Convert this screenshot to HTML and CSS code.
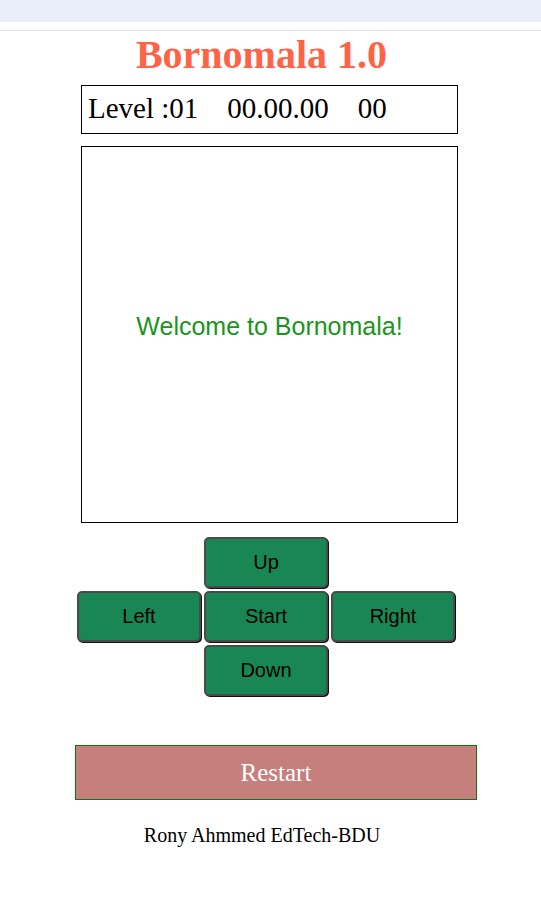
FILE: index.html
```html
<!DOCTYPE html>
<html>
<head>
<meta charset="utf-8">
<title>Bornomala 1.0</title>
<link rel="stylesheet" href="styles.css">
</head>
<body>
<div class="topbar"></div>
<div class="rule"></div>
<h1 class="title">Bornomala 1.0</h1>
<div class="info">Level :01&nbsp;&nbsp;&nbsp;&nbsp;00.00.00&nbsp;&nbsp;&nbsp;&nbsp;00</div>
<div class="board"><span class="welcome">Welcome to Bornomala!</span></div>
<div class="controls">
  <button class="btn up">Up</button>
  <button class="btn left">Left</button>
  <button class="btn start">Start</button>
  <button class="btn right">Right</button>
  <button class="btn down">Down</button>
</div>
<button class="restart">Restart</button>
<p class="footer">Rony Ahmmed EdTech-BDU</p>
</body>
</html>
```
FILE: styles.css
```css
html, body {
  margin: 0;
  padding: 0;
  background: #fff;
  font-family: "Liberation Serif", "Times New Roman", serif;
}
.topbar {
  height: 22px;
  background: #eaeef8;
}
.rule {
  height: 1px;
  margin-top: 8px;
  background: #dedede;
}
.title {
  margin: 1px 0 0;
  width: 523px;
  text-align: center;
  font-size: 40px;
  line-height: 46px;
  font-weight: bold;
  color: #ff6347;
}
.info {
  box-sizing: border-box;
  margin: 7px 0 0 81px;
  width: 377px;
  height: 49px;
  border: 1px solid #000;
  padding: 6px 6px;
  font-size: 29px;
  line-height: 33px;
  color: #000;
  white-space: nowrap;
}
.board {
  box-sizing: border-box;
  margin: 12px 0 0 81px;
  width: 377px;
  height: 377px;
  border: 1px solid #000;
  display: flex;
  align-items: center;
  justify-content: center;
  padding-bottom: 16px;
}
.welcome {
  font-family: "Liberation Sans", Arial, sans-serif;
  font-size: 25px;
  color: #1a951a;
}
.controls {
  margin: 14px 0 0 77px;
  display: grid;
  grid-template-columns: repeat(3, 124px);
  grid-template-rows: repeat(3, 51px);
  gap: 3px;
}
.btn {
  box-sizing: border-box;
  margin: 0;
  padding: 0;
  background: #198754;
  border: 2px solid #4a4a4a;
  border-radius: 5px;
  box-shadow: 1px 1px 0 #111;
  font-family: "Liberation Sans", Arial, sans-serif;
  font-size: 20px;
  color: #000;
}
.up { grid-column: 2; grid-row: 1; }
.left { grid-column: 1; grid-row: 2; }
.start { grid-column: 2; grid-row: 2; }
.right { grid-column: 3; grid-row: 2; }
.down { grid-column: 2; grid-row: 3; }
.restart {
  display: block;
  box-sizing: border-box;
  margin: 49px 0 0 75px;
  width: 402px;
  height: 55px;
  padding: 0;
  background: #c57f7d;
  border: 1px solid #0a7a0a;
  font-family: "Liberation Serif", "Times New Roman", serif;
  font-size: 25px;
  color: #fff;
}
.footer {
  margin: 24px 0 0;
  width: 524px;
  text-align: center;
  font-size: 20px;
  line-height: 23px;
  color: #000;
}
```
